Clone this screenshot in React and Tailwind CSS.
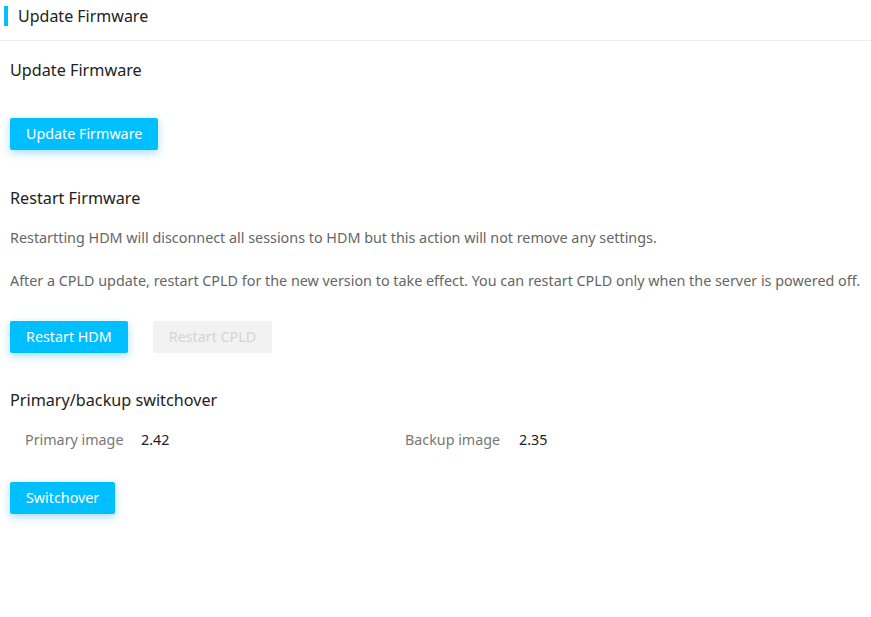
import React from "react";

function PrimaryButton({ text }) {
    return (
        <button className="h-[32px] px-4 rounded-[2px] bg-[#00bfff] text-white text-[14.3px] shadow-[0_3px_8px_rgba(0,160,255,0.35)]">
            {text}
        </button>
    )
}

function SectionTitle({ children }) {
    return <h3 className="text-[16.2px] text-[#222] leading-[22px]">{children}</h3>
}

export default function App() {
    return (
        <div className="bg-white min-h-[617px] w-[871px] font-['Microsoft_YaHei','Noto_Sans','Open_Sans',sans-serif]">
            {/* Page header */}
            <div className="h-[41px] flex items-start pt-[6px] border-b border-[#eceef4] pl-[4px]">
                <span className="w-[4px] h-[20px] bg-[#00bfff]"></span>
                <span className="ml-[10px] text-[16px] text-[#222] leading-[20px]">Update Firmware</span>
            </div>

            <div className="px-[10px]">
                <div className="pt-[18px]">
                    <SectionTitle>Update Firmware</SectionTitle>
                </div>
                <div className="mt-[37px]">
                    <PrimaryButton text={"Update Firmware"} />
                </div>

                <div className="mt-[37px]">
                    <SectionTitle>Restart Firmware</SectionTitle>
                </div>
                <p className="mt-[19px] text-[14.35px] text-[#666] leading-[20px]">
                    Restartting HDM will disconnect all sessions to HDM but this action will not remove any settings.
                </p>
                <p className="mt-[23px] text-[14.35px] text-[#666] leading-[20px]">
                    After a CPLD update, restart CPLD for the new version to take effect. You can restart CPLD only when the server is powered off.
                </p>
                <div className="mt-[30px] flex gap-[25px]">
                    <PrimaryButton text={"Restart HDM"} />
                    <button disabled className="h-[32px] px-4 rounded-[2px] bg-[#f2f2f2] text-[#d4d4d4] text-[14.3px]">
                        Restart CPLD
                    </button>
                </div>

                <div className="mt-[36px]">
                    <SectionTitle>Primary/backup switchover</SectionTitle>
                </div>
                <div className="mt-[19px] flex text-[14.3px] leading-[20px] pl-[15px]">
                    <div className="w-[380px] flex">
                        <span className="w-[116px] text-[#777]">Primary image</span>
                        <span className="text-[#222]">2.42</span>
                    </div>
                    <div className="flex">
                        <span className="w-[114px] text-[#777]">Backup image</span>
                        <span className="text-[#222]">2.35</span>
                    </div>
                </div>
                <div className="mt-[32px]">
                    <PrimaryButton text={"Switchover"} />
                </div>
            </div>
        </div>
    )
}
